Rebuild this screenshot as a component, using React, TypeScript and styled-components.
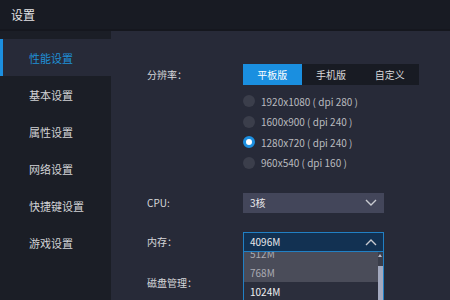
import styled, { createGlobalStyle } from 'styled-components';

const GlobalStyle = createGlobalStyle`
  html, body {
    margin: 0;
    padding: 0;
    width: 450px;
    height: 300px;
    overflow: hidden;
    background: #272a38;
    font-family: "Noto Sans CJK SC", "Noto Sans", sans-serif;
  }
`;

const Wrapper = styled.div`
  width: 450px;
  height: 300px;
  display: flex;
  flex-direction: column;
  overflow: hidden;
`;

const Header = styled.div`
  height: 29px;
  flex-shrink: 0;
  background: #181b23;
  border-bottom: 2px solid #15171e;
  display: flex;
  align-items: center;
  padding-left: 11px;
  font-size: 12px;
  color: #e4e4e6;
`;

const Body = styled.div`
  flex: 1;
  display: flex;
  min-height: 0;
`;

const Sidebar = styled.div`
  width: 111px;
  flex-shrink: 0;
  background: #1b1e26;
  padding-top: 8px;
  display: flex;
  flex-direction: column;
`;

const NavItem = styled.div<{ $active?: boolean }>`
  height: 37px;
  display: flex;
  align-items: center;
  box-sizing: border-box;
  padding-left: 26px;
  font-size: 11px;
  color: ${(p) => (p.$active ? '#1f8fd6' : '#d2d3d6')};
  background: ${(p) => (p.$active ? '#272a38' : 'transparent')};
  border-left: 3px solid ${(p) => (p.$active ? '#1c8fe0' : 'transparent')};
`;

const Main = styled.div`
  flex: 1;
  padding: 33px 0 0 36px;
  display: flex;
  flex-direction: column;
`;

const Row = styled.div<{ $mt?: number }>`
  display: grid;
  grid-template-columns: 96px 141px;
  margin-top: ${(p) => p.$mt ?? 0}px;
`;

const Label = styled.div<{ $h?: number }>`
  font-size: 10px;
  color: #d6d7da;
  height: ${(p) => p.$h ?? 20}px;
  display: flex;
  align-items: center;
`;

const Segments = styled.div`
  display: flex;
  width: 176px;
  height: 21px;
  background: #181b23;
`;

const Segment = styled.div<{ $active?: boolean }>`
  flex: 1;
  display: flex;
  align-items: center;
  justify-content: center;
  font-size: 10px;
  color: ${(p) => (p.$active ? '#ffffff' : '#d8d9dc')};
  background: ${(p) => (p.$active ? '#1a8fe0' : 'transparent')};
`;

const Radios = styled.div`
  display: flex;
  flex-direction: column;
  gap: 8.5px;
  margin-top: 10px;
`;

const RadioRow = styled.div`
  display: flex;
  align-items: center;
  height: 12px;
  gap: 6px;
  font-size: 10px;
  color: #b9babf;
  white-space: nowrap;
`;

const Dot = styled.span<{ $on?: boolean }>`
  width: 12px;
  height: 12px;
  border-radius: 50%;
  box-sizing: border-box;
  background: ${(p) => (p.$on ? '#ffffff' : '#3b3e4b')};
  border: ${(p) => (p.$on ? '3px solid #1c8fe0' : 'none')};
`;

const Select = styled.div<{ $open?: boolean }>`
  height: 20px;
  box-sizing: border-box;
  display: flex;
  align-items: center;
  justify-content: space-between;
  padding: 0 6px;
  font-size: 10px;
  color: #e8e8ea;
  background: ${(p) => (p.$open ? '#123152' : '#43465a')};
  border: 1px solid ${(p) => (p.$open ? '#2180c4' : '#43465a')};
`;

const Chevron = ({ up }: { up?: boolean }) => (
  <svg width="12" height="8" viewBox="0 0 12 8">
    <path
      d={up ? 'M1 7 L6 2 L11 7' : 'M1 1 L6 6 L11 1'}
      fill="none"
      stroke="#c9cad0"
      strokeWidth="1.4"
    />
  </svg>
);

const Drop = styled.div`
  position: relative;
`;

const List = styled.div`
  height: 50px;
  overflow: hidden;
  border-left: 1px solid #2180c4;
  border-right: 1px solid #2180c4;
  background: #2b2e3c;
  position: relative;
`;

const ListInner = styled.div`
  transform: translateY(-8px);
`;

const Option = styled.div<{ $hover?: boolean }>`
  height: 19px;
  display: flex;
  align-items: center;
  padding-left: 6px;
  font-size: 10px;
  color: ${(p) => (p.$hover ? '#a9aab2' : '#eeeef0')};
  background: ${(p) => (p.$hover ? '#4a4c59' : '#2b2e3c')};
`;

const ScrollTrack = styled.div`
  position: absolute;
  right: 0;
  top: 0;
  bottom: 0;
  width: 5px;
  background: #3a3d4a;
`;

const ScrollThumb = styled.div`
  position: absolute;
  left: 0;
  right: 0;
  top: 14px;
  bottom: 0;
  background: #a3a9bf;
`;

const ScrollArrow = styled.div`
  position: absolute;
  left: 0;
  top: 2px;
  width: 0;
  height: 0;
  border-left: 2.5px solid transparent;
  border-right: 2.5px solid transparent;
  border-bottom: 3px solid #b8bccc;
`;

const nav = ['性能设置', '基本设置', '属性设置', '网络设置', '快捷键设置', '游戏设置'];
const resolutions = [
  '1920x1080 ( dpi 280 )',
  '1600x900 ( dpi 240 )',
  '1280x720 ( dpi 240 )',
  '960x540 ( dpi 160 )',
];

function App() {
  return (
    <>
      <GlobalStyle />
      <Wrapper>
        <Header>设置</Header>
        <Body>
          <Sidebar>
            {nav.map((n, i) => (
              <NavItem key={n} $active={i === 0}>
                {n}
              </NavItem>
            ))}
          </Sidebar>
          <Main>
            <Row>
              <Label $h={21}>分辨率：</Label>
              <div>
                <Segments>
                  <Segment $active>平板版</Segment>
                  <Segment>手机版</Segment>
                  <Segment>自定义</Segment>
                </Segments>
                <Radios>
                  {resolutions.map((r, i) => (
                    <RadioRow key={r}>
                      <Dot $on={i === 2} />
                      {r}
                    </RadioRow>
                  ))}
                </Radios>
              </div>
            </Row>
            <Row $mt={24}>
              <Label>CPU:</Label>
              <Select>
                3核
                <Chevron />
              </Select>
            </Row>
            <Row $mt={19}>
              <Label>内存：</Label>
              <Drop>
                <Select $open>
                  4096M
                  <Chevron up />
                </Select>
                <List>
                  <ListInner>
                    <Option $hover>512M</Option>
                    <Option $hover>768M</Option>
                    <Option>1024M</Option>
                  </ListInner>
                  <ScrollTrack>
                    <ScrollArrow />
                    <ScrollThumb />
                  </ScrollTrack>
                </List>
              </Drop>
            </Row>
            <Row style={{ marginTop: -29 }}>
              <Label>磁盘管理：</Label>
            </Row>
          </Main>
        </Body>
      </Wrapper>
    </>
  );
}

export default App;
